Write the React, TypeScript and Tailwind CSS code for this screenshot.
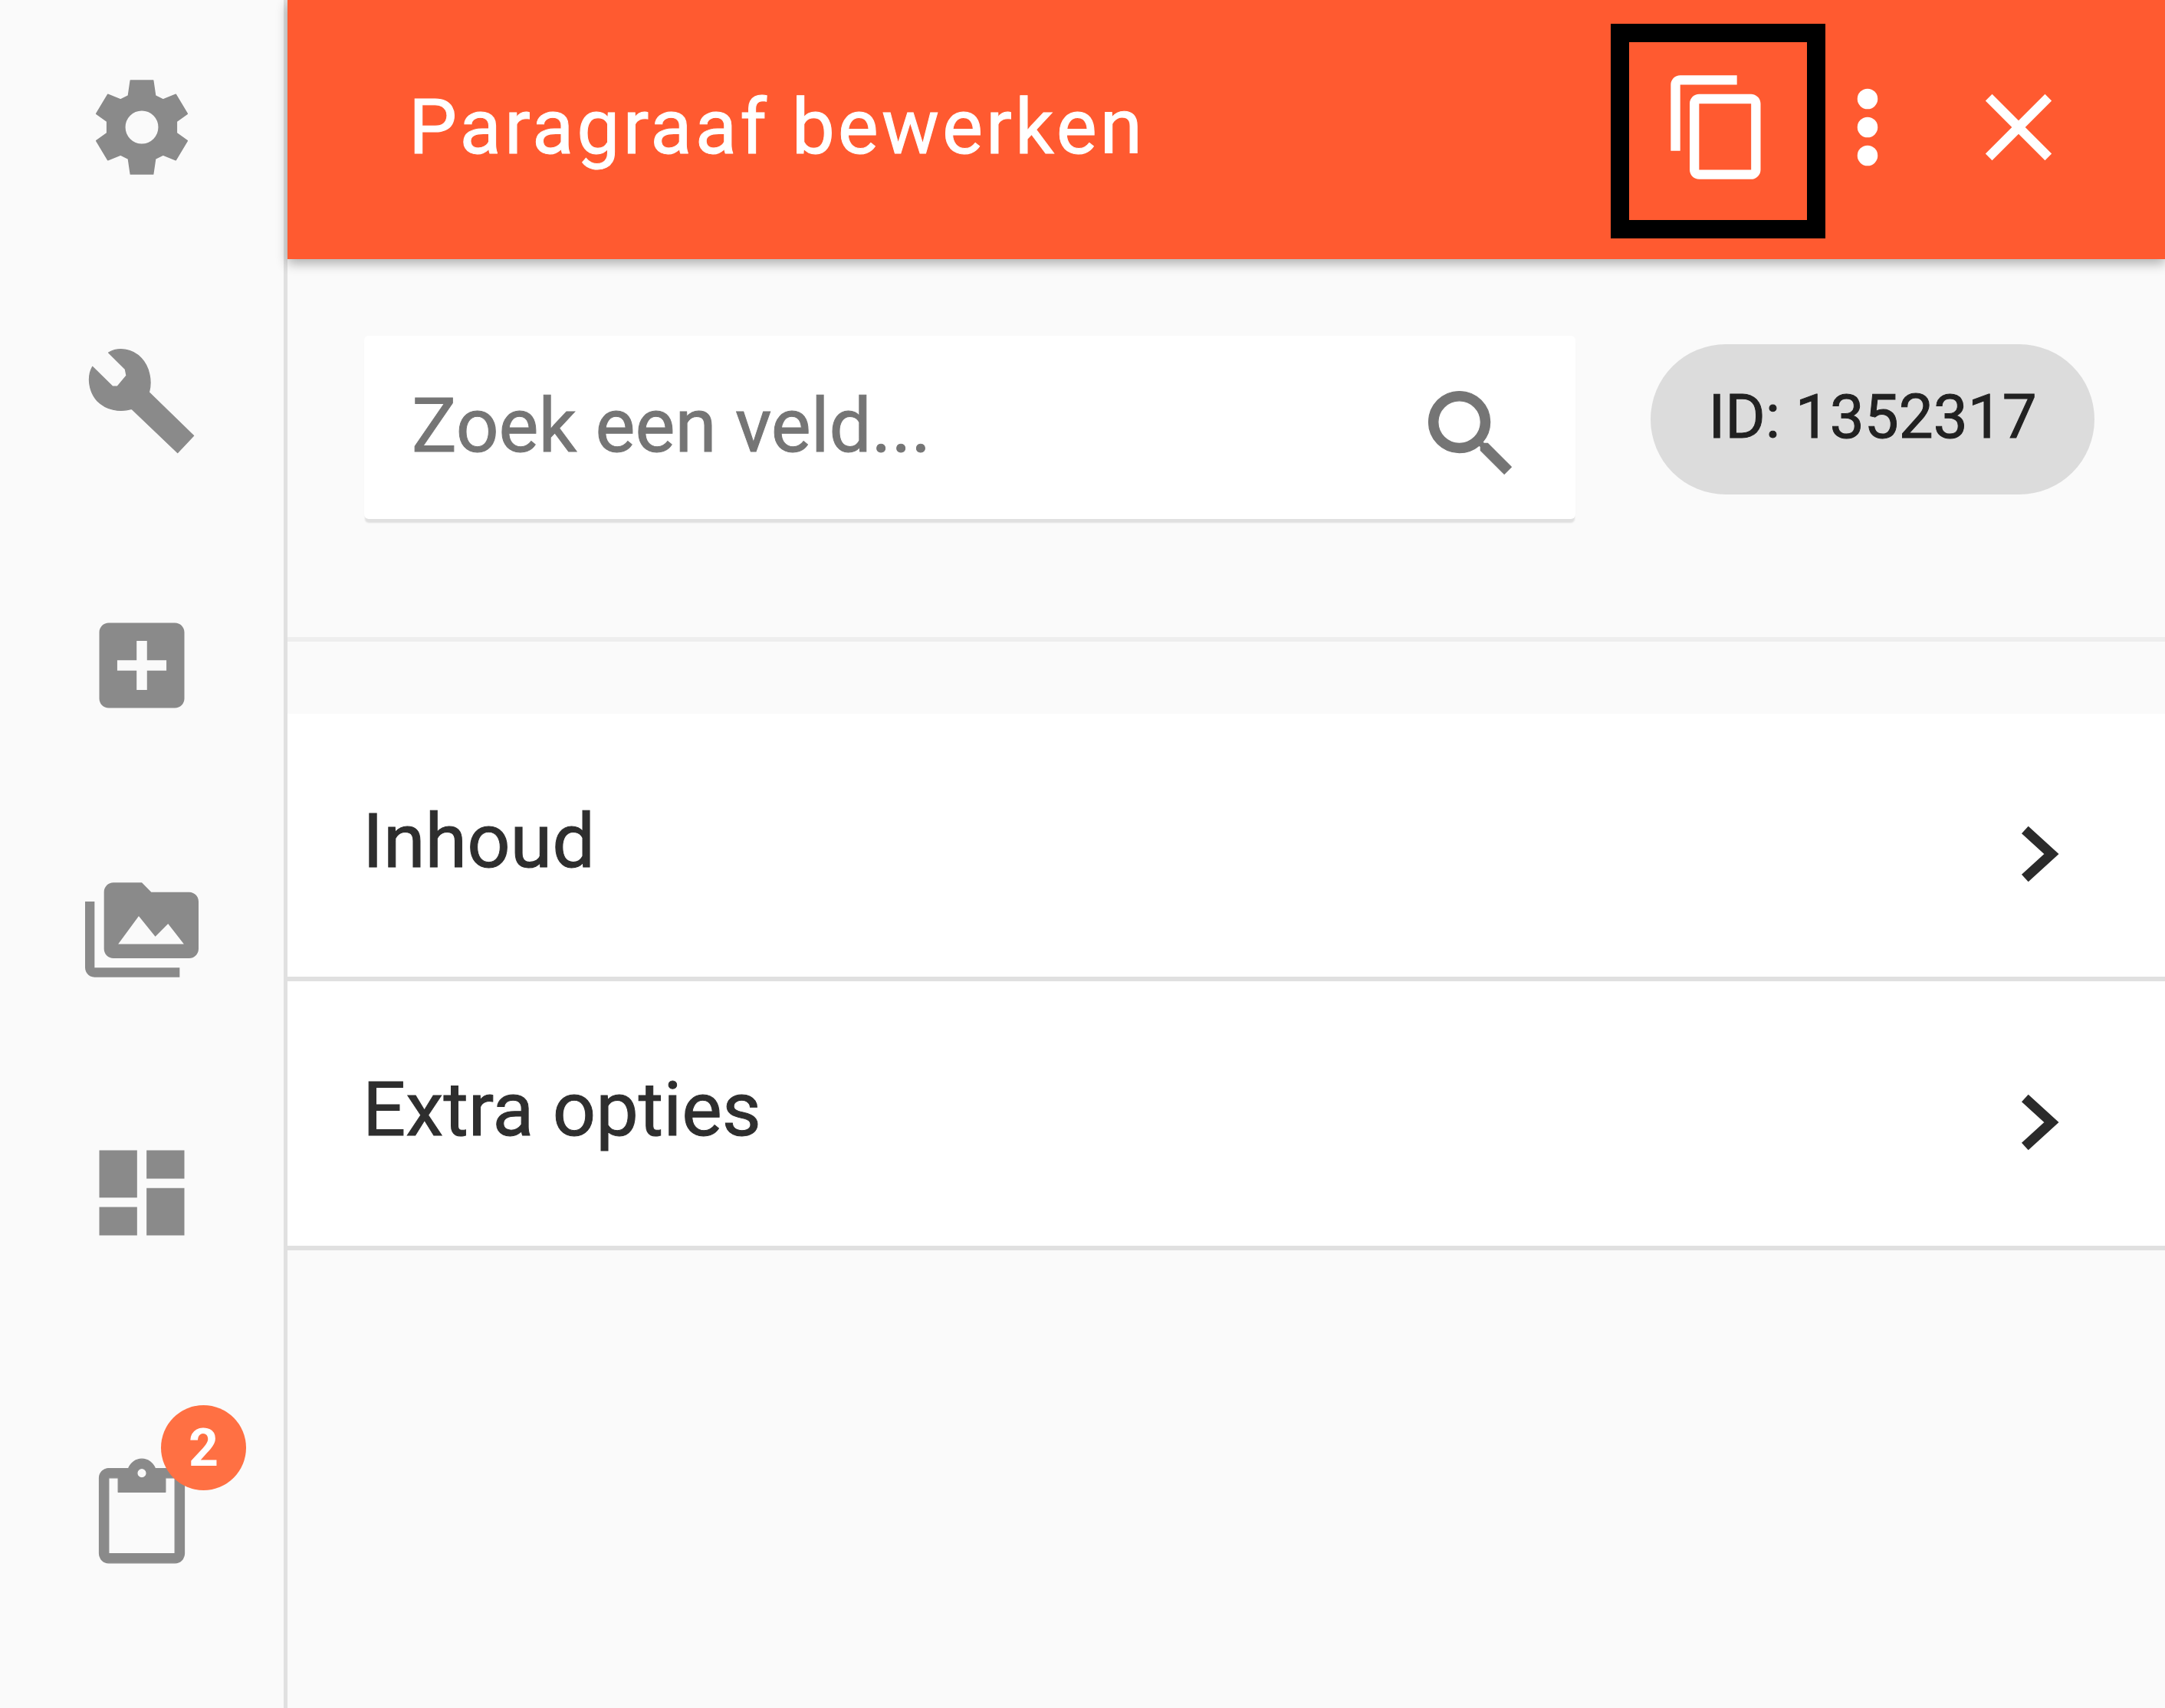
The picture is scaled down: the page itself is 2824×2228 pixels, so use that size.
import { MdClose, MdContentCopy, MdDashboard } from "react-icons/md";

type IconProps = { className?: string };

// 24 unit material-style glyph, slightly fattened to match the soft screenshot
const Glyph = ({ d, weight = 0, className }: { d: string; weight?: number; className?: string }) => (
  <svg viewBox="0 0 24 24" width={148} height={148} fill="currentColor" stroke="currentColor" strokeWidth={weight} strokeLinejoin="round" className={className}>
    <path fillRule="evenodd" d={d} />
  </svg>
);

const Gear = ({ className }: IconProps) => (
  <Glyph
    weight={0.25}
    className={className}
    d="M9.62 2.1H14.38L14.86 5.35L16.49 6.16L19.19 5.08L21.62 9.14L19.35 10.76V13.24L21.62 14.86L19.19 18.92L16.49 17.84L14.86 18.65L14.38 21.9H9.62L9.14 18.65L7.51 17.84L4.81 18.92L2.38 14.86L4.65 13.24V10.76L2.38 9.14L4.81 5.08L7.51 6.16L9.14 5.35ZM12 8.4A3.6 3.6 0 1 0 12 15.6A3.6 3.6 0 1 0 12 8.4Z"
  />
);

const Wrench = ({ className }: IconProps) => (
  <Glyph
    weight={0.2}
    className={className}
    d="M4.97 1.78C7 .6 10 .9 11.9 3C13.6 4.8 14.2 7.8 13.51 10.16L22.97 19.35L19.57 22.97L9.84 13.68C7.2 14.5 4.4 13.8 2.6 12C.9 10.2.3 7 1.57 4.76L5.78 8.92H6.86L8.76 6.65L8.49 5.3Z"
  />
);

const AddBox = ({ className }: IconProps) => (
  <Glyph
    className={className}
    d="M19 3H5c-1.1 0-2 .9-2 2v14c0 1.1.9 2 2 2h14c1.1 0 2-.9 2-2V5c0-1.1-.9-2-2-2zm-1.8 10.1h-4.1v4.1h-2.2v-4.1H6.8v-2.2h4.1V6.8h2.2v4.1h4.1z"
  />
);

const PhotoFolder = ({ className }: IconProps) => (
  <Glyph
    className={className}
    d="M2 6H0v14c0 1.1.9 2 2 2h18v-2H2V6zM22 4h-8l-2-2H6c-1.1 0-2 .9-2 2v12c0 1.1.9 2 2 2h16c1.1 0 2-.9 2-2V6c0-1.1-.9-2-2-2zM7 15l4.35-5.9 3.5 4.3 2.7-2.7 3.35 4.3z"
  />
);

const Clipboard = ({ className }: IconProps) => (
  <Glyph
    weight={0.2}
    className={className}
    d="M19 3h-4.18C14.4 1.84 13.3 1 12 1s-2.4.84-2.82 2H5c-1.1 0-2 .9-2 2v16c0 1.1.9 2 2 2h14c1.1 0 2-.9 2-2V5c0-1.1-.9-2-2-2zm-7 0c.55 0 1 .45 1 1s-.45 1-1 1-1-.45-1-1 .45-1 1-1zm7 18H5V5h2v3h10V5h2v16z"
  />
);

const Search = ({ className }: IconProps) => (
  <Glyph
    weight={0.2}
    className={className}
    d="M15.5 14h-.79l-.28-.27C15.41 12.59 16 11.11 16 9.5 16 5.91 13.09 3 9.5 3S3 5.91 3 9.5 5.91 16 9.5 16c1.61 0 3.09-.59 4.23-1.57l.27.28v.79l5 4.99L20.49 19l-4.99-5zm-6 0C7.01 14 5 11.99 5 9.5S7.01 5 9.5 5 14 7.01 14 9.5 11.99 14 9.5 14z"
  />
);

const Dots = ({ className }: IconProps) => (
  <svg viewBox="0 0 24 24" width={148} height={148} fill="currentColor" className={className}>
    <circle cx="12" cy="6" r="2.15" />
    <circle cx="12" cy="12" r="2.15" />
    <circle cx="12" cy="18" r="2.15" />
  </svg>
);

const Chevron = ({ className }: IconProps) => (
  <svg viewBox="0 0 24 24" width={148} height={148} fill="none" stroke="currentColor" strokeWidth={2.1} className={className}>
    <path d="M9.3 6.9L14.9 12L9.3 17.1" />
  </svg>
);

const Row = ({ label, className }: { label: string; className: string }) => (
  <div className={`flex items-center justify-between bg-white border-b-[6px] border-[#e0e0e0] pl-[98px] pr-[92px] ${className}`}>
    <span className="pb-[11px] text-[99px] leading-none text-[#2e2e2e] [-webkit-text-stroke:1px_#2e2e2e]">{label}</span>
    <Chevron className="mt-[22px] text-[#2b2b2b]" />
  </div>
);

export default function App() {
  return (
    <div className="flex h-[2228px] w-[2824px] overflow-hidden bg-[#fafafa] font-['Roboto',sans-serif]">
      {/* Sidebar */}
      <aside className="flex w-[375px] shrink-0 flex-col items-center border-r-[5px] border-[#e0e0e0] pt-[92px] text-[#8a8a8a]">
        <Gear className="shrink-0" />
        <Wrench className="mt-[209px] shrink-0" />
        <AddBox className="mt-[197px] shrink-0" />
        <PhotoFolder className="mt-[197px] shrink-0" />
        <MdDashboard size={148} className="mt-[195px] shrink-0" />
        <div className="relative mt-[267px] shrink-0">
          <Clipboard />
          <span className="absolute left-[99px] top-[-64px] flex h-[111px] w-[111px] items-center justify-center rounded-full bg-[#ff7043] text-[68px] font-bold leading-none text-white">
            2
          </span>
        </div>
      </aside>

      {/* Panel */}
      <main className="flex min-w-0 flex-1 flex-col">
        <header className="relative z-10 flex h-[338px] shrink-0 items-center bg-[#ff5a30] pb-[6px] pl-[158px] pr-[117px] text-white shadow-[0_6px_14px_rgba(0,0,0,0.3)]">
          <h1 className="flex-1 text-[100px] font-normal leading-none tracking-[4px] [-webkit-text-stroke:1px_#ffffff]">Paragraaf bewerken</h1>
          <div className="mt-[31px] flex h-[280px] w-[280px] shrink-0 items-center justify-center self-start border-[24px] border-black pb-[10px]">
            <MdContentCopy size={148} className="shrink-0" />
          </div>
          <Dots className="ml-[-19px] shrink-0" />
          <MdClose size={148} className="ml-[49px] shrink-0" />
        </header>

        <div className="flex h-[499px] shrink-0 items-start border-b-[6px] border-[#eeeeee] pl-[100px] pt-[100px]">
          <div className="flex h-[239px] w-[1580px] shrink-0 items-center rounded-[6px] bg-white pl-[62px] pr-[62px] shadow-[0_6px_2px_-1px_#e0e0e0]">
            <input
              readOnly
              placeholder="Zoek een veld..."
              className="min-w-0 flex-1 bg-transparent pb-[4px] text-[98px] leading-none text-[#757575] outline-none [-webkit-text-stroke:1px_#757575] placeholder:text-[#757575]"
            />
            <Search className="mt-[16px] shrink-0 text-[#757575]" />
          </div>
          <div className="ml-[98px] mt-[11px] flex h-[196px] w-[579px] shrink-0 items-center justify-center rounded-full bg-[#dcdcdc] pb-[6px] text-[80px] leading-none text-[#212121] [-webkit-text-stroke:1px_#212121]">
            ID: 1352317
          </div>
        </div>

        <div className="mt-[94px]">
          <Row label="Inhoud" className="h-[349px]" />
          <Row label="Extra opties" className="h-[351px]" />
        </div>
      </main>
    </div>
  );
}
